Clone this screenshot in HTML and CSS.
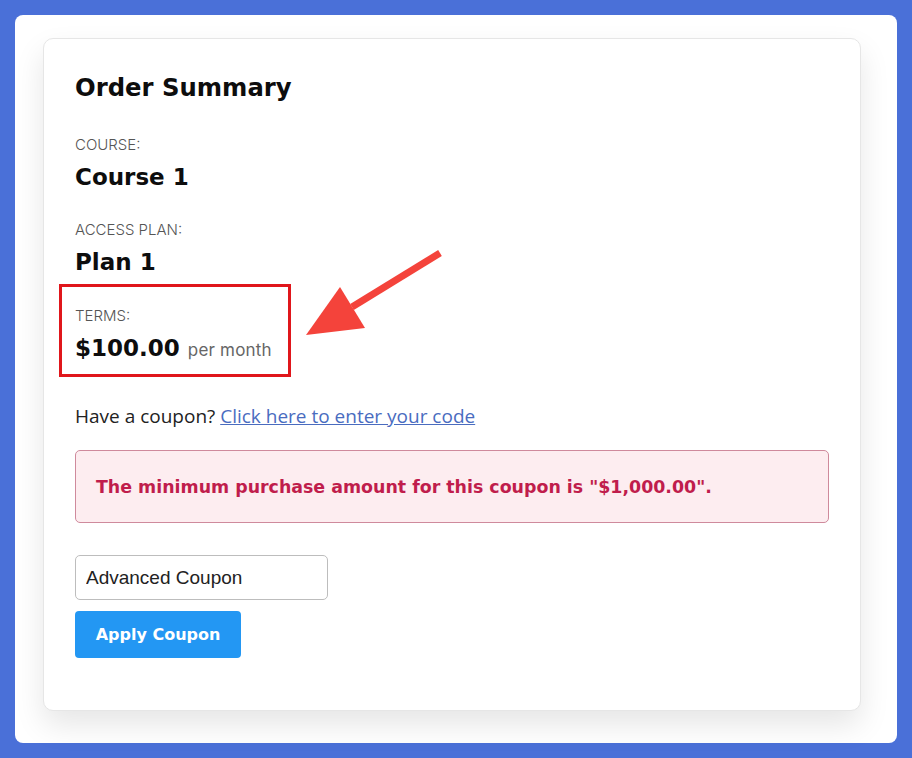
FILE: index.html
```html
<!DOCTYPE html>
<html>
<head>
<meta charset="utf-8">
<link rel="stylesheet" href="styles.css">
</head>
<body>
<div class="frame">
  <div class="card">
    <h2 class="title">Order Summary</h2>
    <div class="field">
      <div class="label">COURSE:</div>
      <div class="value">Course 1</div>
    </div>
    <div class="field">
      <div class="label">ACCESS PLAN:</div>
      <div class="value">Plan 1</div>
    </div>
    <div class="terms">
      <div class="label">TERMS:</div>
      <div class="value"><span class="price">$100.00</span> <span class="per">per month</span></div>
    </div>
    <svg class="arrow" width="150" height="100" viewBox="0 0 150 100">
      <line x1="140" y1="3" x2="52" y2="57" stroke="#f4433b" stroke-width="7" stroke-linecap="butt"/>
      <polygon points="6,85 40,37 65,78" fill="#f4433b"/>
    </svg>
    <p class="coupon-q">Have a coupon? <a href="#" class="link">Click here to enter your code</a></p>
    <div class="error">The minimum purchase amount for this coupon is "$1,000.00".</div>
    <div class="form">
      <input class="input" type="text" value="Advanced Coupon">
      <button class="btn">Apply Coupon</button>
    </div>
  </div>
</div>
</body>
</html>
```
FILE: styles.css
```css
html, body { margin: 0; padding: 0; }
body { background: #4a70d8; width: 912px; height: 758px; overflow: hidden; font-family: "Open Sans", sans-serif; }
.frame {
  margin: 15px;
  height: 728px;
  background: #fff;
  border-radius: 8px;
  padding: 23px 0 0 28px;
  box-sizing: border-box;
}
.card {
  position: relative;
  width: 818px;
  height: 673px;
  box-sizing: border-box;
  border: 1px solid #e6e6e6;
  border-radius: 10px;
  background: #fff;
  box-shadow: 0 14px 30px rgba(0,0,0,0.1);
  padding: 34px 31px 0 31px;
}
.title {
  margin: 0 0 34px;
  font-family: "DejaVu Sans", sans-serif;
  font-weight: 700;
  font-size: 24.3px;
  line-height: 30px;
  color: #0d0d0d;
}
.field { margin-bottom: 31px; }
.label {
  font-family: "Inter", sans-serif;
  font-weight: 300;
  font-size: 15px;
  line-height: 16px;
  color: #555;
}
.value {
  margin-top: 10px;
  font-family: "DejaVu Sans", sans-serif;
  font-weight: 700;
  font-size: 23px;
  line-height: 28px;
  color: #0d0d0d;
}
.terms {
  width: 232px;
  box-sizing: border-box;
  margin-left: -16px;
  margin-top: -23px;
  border: 3px solid #e0161b;
  padding: 21px 0 10px 13px;
}
.per { font-family: "Inter", sans-serif; font-weight: 400; font-size: 17px; letter-spacing: 0.2px; color: #666; }
.arrow { position: absolute; left: 256px; top: 211px; }
.coupon-q {
  margin: 27px 0 0;
  font-size: 19px;
  line-height: 24px;
  color: #222;
}
.link { color: #4a6cbf; text-decoration: underline; }
.error {
  margin-top: 22px;
  height: 73px;
  box-sizing: border-box;
  background: #fdedf0;
  border: 1px solid #cf8a9c;
  border-radius: 5px;
  padding: 0 20px;
  display: flex;
  align-items: center;
  font-family: "DejaVu Sans", sans-serif;
  font-weight: 700;
  font-size: 17.4px;
  color: #c01d4c;
}
.form { margin-top: 32px; display: flex; flex-direction: column; align-items: flex-start; gap: 11px; }
.input {
  width: 253px;
  height: 45px;
  box-sizing: border-box;
  border: 1px solid #bdbdbd;
  border-radius: 5px;
  padding: 0 10px;
  font-family: "Liberation Sans", Arial, sans-serif;
  font-size: 19px;
  color: #222;
  outline: none;
}
.btn {
  width: 166px;
  height: 47px;
  border: none;
  border-radius: 4px;
  background: #2397f3;
  color: #fff;
  font-family: "DejaVu Sans", sans-serif;
  font-weight: 700;
  font-size: 16px;
  cursor: pointer;
}
```
